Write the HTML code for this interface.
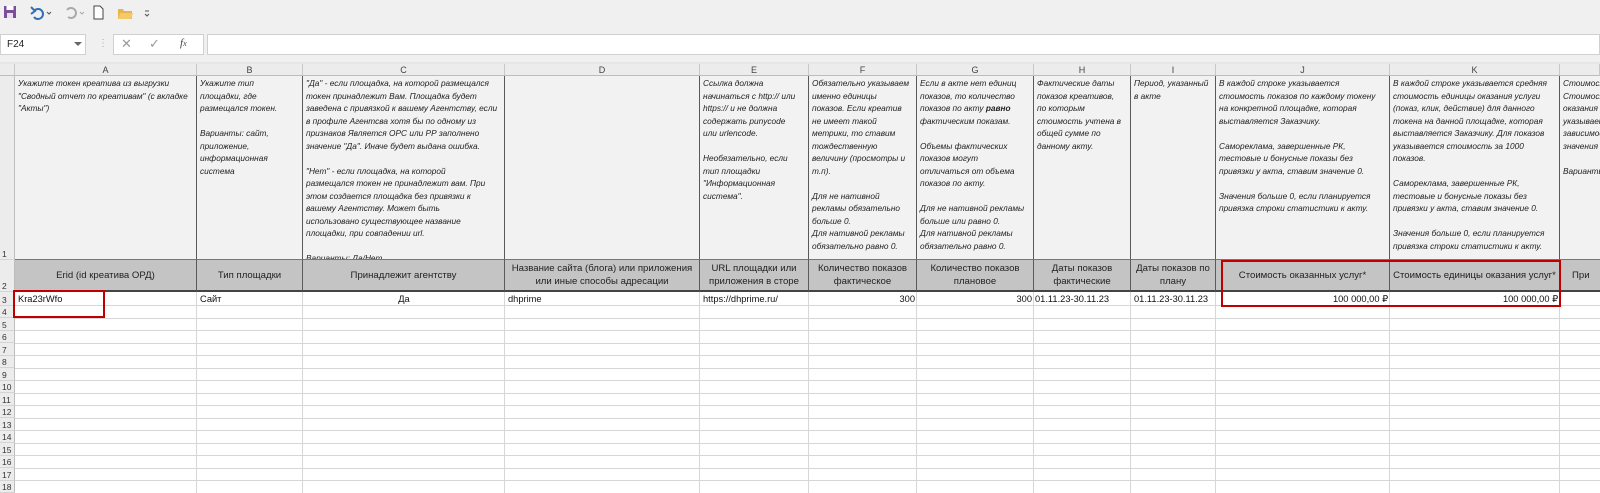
<!DOCTYPE html>
<html><head><meta charset="utf-8"><style>
*{margin:0;padding:0;box-sizing:border-box}
body{width:1600px;height:493px;overflow:hidden;background:#fff;font-family:"Liberation Sans",sans-serif;position:relative}
.a{position:absolute}
.hd{position:absolute;top:64px;height:12px;background:#ececec;border-right:1px solid #c8c8c8;border-bottom:1px solid #bdbdbd;font-size:9px;color:#444;text-align:center;line-height:12px}
.r1{position:absolute;top:76px;height:184px;background:#f2f2f2;border-right:1.5px solid #5a5a5a;border-bottom:1px solid #777;overflow:hidden;font-style:italic;font-size:8.3px;line-height:12.5px;color:#222;padding:1px 0 0 3px;white-space:nowrap}
.r2{position:absolute;top:260px;height:32px;background:#c4c4c4;border-right:1.5px solid #5a5a5a;border-bottom:2px solid #444;font-size:9.6px;line-height:13px;color:#222;text-align:center;display:flex;align-items:center;justify-content:center;overflow:hidden;white-space:nowrap}
.rn{position:absolute;left:0;width:15px;background:#ececec;border-right:1px solid #bdbdbd;border-bottom:1px solid #d4d4d4;font-size:8.5px;color:#333;padding-left:2px;display:flex;align-items:flex-end}
.d{position:absolute;top:292px;height:14px;font-size:9.3px;line-height:14px;color:#111;white-space:nowrap}
</style></head><body>
<!-- toolbar -->
<div class="a" style="left:0;top:0;width:1600px;height:62px;background:#f0f0f0"></div>
<svg class="a" style="left:2px;top:3px" width="160" height="18" viewBox="0 0 160 18">
<rect x="2" y="3" width="12" height="12" fill="#7b4d9a"/><rect x="4.5" y="3" width="7" height="4" fill="#fff"/><rect x="5" y="10" width="6" height="5" fill="#e8dff0"/>
<path d="M33 7 a5 5 0 1 1 -1 7" stroke="#2f6fb5" stroke-width="2" fill="none"/><path d="M29 4 L33 8 L29 11" stroke="#2f6fb5" stroke-width="2" fill="none" transform="translate(0,0)"/>
<path d="M45 9 l2 2 l2 -2" stroke="#555" fill="none"/>
<path d="M66 14 a5 5 0 1 0 -1 -7" stroke="#aaa" stroke-width="2" fill="none"/>
<path d="M78 9 l2 2 l2 -2" stroke="#aaa" fill="none"/>
<path d="M92 3 h6 l3 3 v10 h-9z" stroke="#444" fill="#fff"/>
<path d="M116 6 h5 l1 2 h8 v8 h-14z" fill="#e9b44c"/><path d="M118 10 h13 l-2 6 h-13z" fill="#f4c96a"/>
<path d="M143 8 h4 M143 11 l2 2 l2 -2" stroke="#555" fill="none"/>
</svg>
<div class="a" style="left:0;top:34px;width:86px;height:21px;background:#fff;border:1px solid #d0d0d0;font-size:10px;line-height:19px;padding-left:6px;color:#222">F24</div>
<div class="a" style="left:74px;top:42px;width:0;height:0;border-left:4px solid transparent;border-right:4px solid transparent;border-top:4px solid #666"></div>
<div class="a" style="left:98px;top:38px;font-size:10px;color:#aaa">⋮</div>
<div class="a" style="left:113px;top:34px;width:91px;height:21px;background:#fff;border:1px solid #d0d0d0"></div>
<div class="a" style="left:121px;top:36px;font-size:13px;color:#999">✕</div>
<div class="a" style="left:149px;top:36px;font-size:13px;color:#999">✓</div>
<div class="a" style="left:180px;top:37px;font-size:11px;font-style:italic;font-family:'Liberation Serif',serif;color:#444">f<span style="font-size:8px">x</span></div>
<div class="a" style="left:207px;top:34px;width:1393px;height:21px;background:#fff;border:1px solid #d0d0d0"></div>
<div class="a" style="left:0;top:62px;width:1600px;height:2px;background:#e6e6e6"></div>
<!-- column headers -->
<div class="hd" style="left:0;width:15px"></div>
<div class="hd" style="left:15px;width:182px">A</div>
<div class="hd" style="left:197px;width:106px">B</div>
<div class="hd" style="left:303px;width:202px">C</div>
<div class="hd" style="left:505px;width:195px">D</div>
<div class="hd" style="left:700px;width:109px">E</div>
<div class="hd" style="left:809px;width:108px">F</div>
<div class="hd" style="left:917px;width:117px">G</div>
<div class="hd" style="left:1034px;width:97px">H</div>
<div class="hd" style="left:1131px;width:85px">I</div>
<div class="hd" style="left:1216px;width:174px">J</div>
<div class="hd" style="left:1390px;width:170px">K</div>
<div class="hd" style="left:1560px;width:40px"></div>
<!-- row 1 -->
<div class="rn" style="top:76px;height:184px">1</div>
<div class="r1" style="left:15px;width:182px">Укажите токен креатива  из выгрузки<br>"Сводный отчет по креативам" (с вкладке<br>"Акты")</div>
<div class="r1" style="left:197px;width:106px">Укажите тип<br>площадки, где<br>размещался токен.<br><br>Варианты: сайт,<br>приложение,<br>информационная<br>система</div>
<div class="r1" style="left:303px;width:202px">"Да"  - если площадка, на которой размещался<br>токен принадлежит Вам. Площадка будет<br>заведена с привязкой к вашему Агентству, если<br>в профиле Агентсва  хотя бы по одному из<br>признаков  Является ОРС или РР заполнено<br>значение "Да". Иначе будет выдана ошибка.<br><br>"Нет" - если площадка, на которой<br>размещался токен не принадлежит вам. При<br>этом создается площадка без привязки к<br>вашему Агентству. Может быть<br>использовано существующее название<br>площадки, при совпадении url.<br><br>Варианты: Да/Нет</div>
<div class="r1" style="left:505px;width:195px"></div>
<div class="r1" style="left:700px;width:109px">Ссылка должна<br>начинаться с http:// или<br>https:// и не должна<br>содержать punycode<br>или urlencode.<br><br>Необязательно, если<br>тип площадки<br>"Информационная<br>система".</div>
<div class="r1" style="left:809px;width:108px">Обязательно указываем<br>именно единицы<br>показов. Если креатив<br>не имеет такой<br>метрики, то ставим<br>тождественную<br>величину (просмотры и<br>т.п).<br><br>Для не нативной<br>рекламы обязательно<br>больше 0.<br>Для нативной рекламы<br>обязательно равно 0.</div>
<div class="r1" style="left:917px;width:117px">Если в акте нет единиц<br>показов, то количество<br>показов по акту <b>равно</b><br>фактическим показам.<br><br>Объемы фактических<br>показов могут<br>отличаться от объема<br>показов по акту.<br><br>Для не нативной рекламы<br>больше или равно 0.<br>Для нативной рекламы<br>обязательно равно 0.</div>
<div class="r1" style="left:1034px;width:97px">Фактические даты<br>показов креативов,<br>по которым<br>стоимость учтена в<br>общей сумме по<br>данному акту.</div>
<div class="r1" style="left:1131px;width:85px">Период, указанный<br>в акте</div>
<div class="r1" style="left:1216px;width:174px">В каждой строке указывается<br>стоимость показов по каждому токену<br>на конкретной площадке, которая<br>выставляется Заказчику.<br><br>Самореклама, завершенные РК,<br>тестовые и бонусные показы без<br>привязки у акта, ставим значение 0.<br><br>Значения больше 0, если планируется<br>привязка строки статистики к акту.</div>
<div class="r1" style="left:1390px;width:170px">В каждой строке указывается средняя<br>стоимость единицы оказания услуги<br>(показ, клик, действие) для данного<br>токена на данной площадке, которая<br>выставляется Заказчику. Для показов<br>указывается стоимость за 1000<br>показов.<br><br>Самореклама, завершенные РК,<br>тестовые и бонусные показы без<br>привязки у акта, ставим значение 0.<br><br>Значения больше 0, если планируется<br>привязка строки статистики к акту.</div>
<div class="r1" style="left:1560px;width:40px;border-right:none">Стоимость<br>Стоимость<br>оказания<br>указывается<br>зависимость<br>значения<br><br>Варианты</div>
<!-- row 2 -->
<div class="rn" style="top:260px;height:32px">2</div>
<div class="r2" style="left:15px;width:182px">Erid (id креатива ОРД)</div>
<div class="r2" style="left:197px;width:106px">Тип площадки</div>
<div class="r2" style="left:303px;width:202px">Принадлежит агентству</div>
<div class="r2" style="left:505px;width:195px">Название сайта (блога) или приложения<br>или иные способы адресации</div>
<div class="r2" style="left:700px;width:109px">URL площадки или<br>приложения в сторе</div>
<div class="r2" style="left:809px;width:108px">Количество показов<br>фактическое</div>
<div class="r2" style="left:917px;width:117px">Количество показов<br>плановое</div>
<div class="r2" style="left:1034px;width:97px">Даты показов<br>фактические</div>
<div class="r2" style="left:1131px;width:85px">Даты показов по<br>плану</div>
<div class="r2" style="left:1216px;width:174px">Стоимость оказанных услуг*</div>
<div class="r2" style="left:1390px;width:170px">Стоимость единицы оказания услуг*</div>
<div class="r2" style="left:1560px;width:40px;border-right:none;justify-content:flex-start;padding-left:12px">При</div>
<!-- grid rows -->
<svg class="a" style="left:15px;top:292px" width="1585" height="201">
<g stroke="#d6d6d6" stroke-width="1">
<line x1="0" x2="1585" y1="13.5" y2="13.5"/><line x1="0" x2="1585" y1="26.5" y2="26.5"/><line x1="0" x2="1585" y1="38.5" y2="38.5"/><line x1="0" x2="1585" y1="51.5" y2="51.5"/><line x1="0" x2="1585" y1="63.5" y2="63.5"/><line x1="0" x2="1585" y1="76.5" y2="76.5"/><line x1="0" x2="1585" y1="88.5" y2="88.5"/><line x1="0" x2="1585" y1="101.5" y2="101.5"/><line x1="0" x2="1585" y1="113.5" y2="113.5"/><line x1="0" x2="1585" y1="126.5" y2="126.5"/><line x1="0" x2="1585" y1="138.5" y2="138.5"/><line x1="0" x2="1585" y1="151.5" y2="151.5"/><line x1="0" x2="1585" y1="163.5" y2="163.5"/><line x1="0" x2="1585" y1="176.5" y2="176.5"/><line x1="0" x2="1585" y1="188.5" y2="188.5"/>
<line x1="181.5" x2="181.5" y1="0" y2="201"/><line x1="287.5" x2="287.5" y1="0" y2="201"/><line x1="489.5" x2="489.5" y1="0" y2="201"/><line x1="684.5" x2="684.5" y1="0" y2="201"/><line x1="793.5" x2="793.5" y1="0" y2="201"/><line x1="901.5" x2="901.5" y1="0" y2="201"/><line x1="1018.5" x2="1018.5" y1="0" y2="201"/><line x1="1115.5" x2="1115.5" y1="0" y2="201"/><line x1="1200.5" x2="1200.5" y1="0" y2="201"/><line x1="1374.5" x2="1374.5" y1="0" y2="201"/><line x1="1544.5" x2="1544.5" y1="0" y2="201"/>
</g></svg>
<div class="rn" style="top:292px;height:14px">3</div>
<div class="rn" style="top:306px;height:12px">4</div>
<div class="rn" style="top:318px;height:13px">5</div>
<div class="rn" style="top:331px;height:12px">6</div>
<div class="rn" style="top:343px;height:13px">7</div>
<div class="rn" style="top:356px;height:12px">8</div>
<div class="rn" style="top:368px;height:13px">9</div>
<div class="rn" style="top:381px;height:12px">10</div>
<div class="rn" style="top:393px;height:13px">11</div>
<div class="rn" style="top:406px;height:12px">12</div>
<div class="rn" style="top:418px;height:13px">13</div>
<div class="rn" style="top:431px;height:12px">14</div>
<div class="rn" style="top:443px;height:13px">15</div>
<div class="rn" style="top:456px;height:12px">16</div>
<div class="rn" style="top:468px;height:13px">17</div>
<div class="rn" style="top:481px;height:12px">18</div>
<!-- data -->
<div class="d" style="left:18px">Kra23rWfo</div>
<div class="d" style="left:200px">Сайт</div>
<div class="d" style="left:303px;width:202px;text-align:center">Да</div>
<div class="d" style="left:508px">dhprime</div>
<div class="d" style="left:703px">https://dhprime.ru/</div>
<div class="d" style="left:809px;width:106px;text-align:right">300</div>
<div class="d" style="left:917px;width:115px;text-align:right">300</div>
<div class="d" style="left:1035px">01.11.23-30.11.23</div>
<div class="d" style="left:1134px">01.11.23-30.11.23</div>
<div class="d" style="left:1216px;width:172px;text-align:right">100 000,00 ₽</div>
<div class="d" style="left:1390px;width:168px;text-align:right">100 000,00 ₽</div>
<!-- red boxes -->
<div class="a" style="left:13px;top:290px;width:92px;height:28px;border:2.5px solid #c00000"></div>
<div class="a" style="left:1221px;top:260px;width:340px;height:47px;border:2.5px solid #c00000"></div>
</body></html>
